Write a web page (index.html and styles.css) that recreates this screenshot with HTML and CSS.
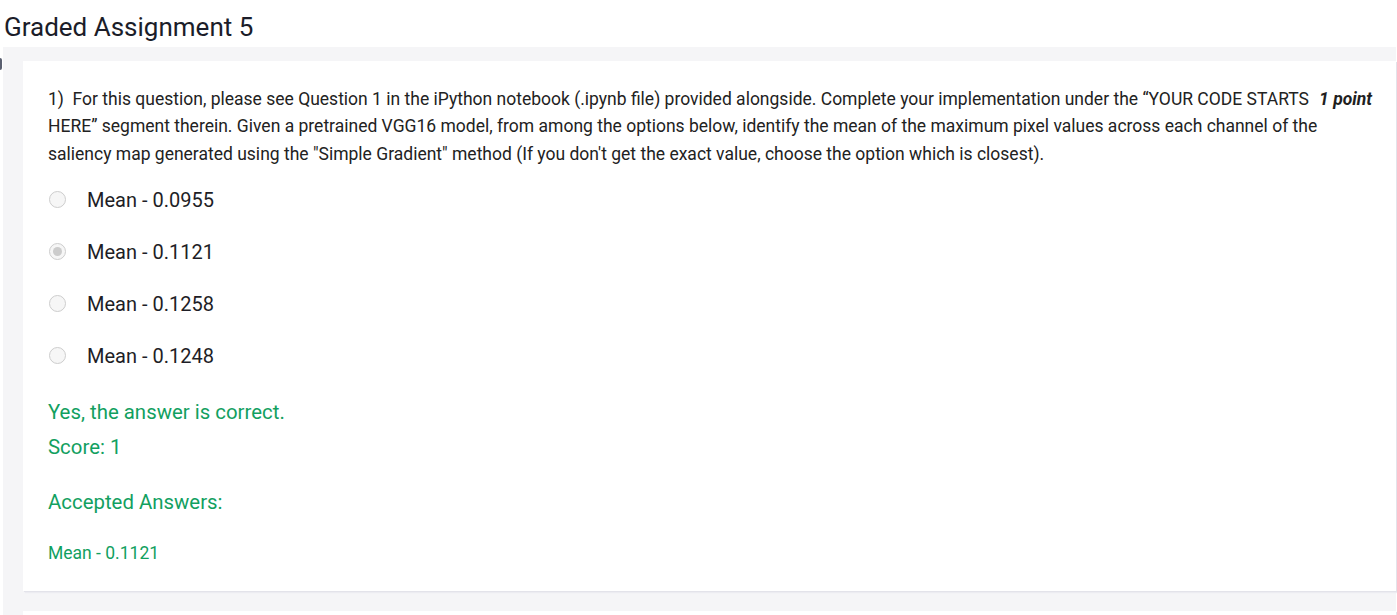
FILE: index.html
```html
<!DOCTYPE html>
<html>
<head>
<meta charset="utf-8">
<link rel="stylesheet" href="styles.css">
</head>
<body>
<span class="edge-mark"></span>
<h1 class="title">Graded Assignment 5</h1>
<div class="panel">
  <div class="card">
    <div class="question">
      <div class="q-point">1 point</div>
      <div class="q-text">1)&nbsp; For this question, please see Question 1 in the iPython notebook (.ipynb file) provided alongside. Complete your implementation under the “YOUR CODE STARTS HERE” segment therein. Given a pretrained VGG16 model, from among the options below, identify the mean of the maximum pixel values across each channel of the saliency map generated using the "Simple Gradient" method (If you don't get the exact value, choose the option which is closest).</div>
    </div>
    <div class="options">
      <div class="option"><span class="radio"></span><span class="opt-label">Mean - 0.0955</span></div>
      <div class="option"><span class="radio checked"></span><span class="opt-label">Mean - 0.1121</span></div>
      <div class="option"><span class="radio"></span><span class="opt-label">Mean - 0.1258</span></div>
      <div class="option"><span class="radio"></span><span class="opt-label">Mean - 0.1248</span></div>
    </div>
    <div class="feedback">
      <div class="fb-line">Yes, the answer is correct.</div>
      <div class="fb-line">Score: 1</div>
      <div class="fb-accepted">Accepted Answers:</div>
      <div class="fb-answer">Mean - 0.1121</div>
    </div>
  </div>
  <div class="card next"></div>
</div>
</body>
</html>
```

FILE: styles.css
```css
html, body {
  margin: 0;
  padding: 0;
  background: #ffffff;
  font-family: Roboto, "Liberation Sans", Arial, sans-serif;
  overflow: hidden;
}

body {
  position: relative;
  height: 615px;
}

.edge-mark {
  position: absolute;
  left: -2px;
  top: 58px;
  width: 4px;
  height: 12px;
  border-radius: 2px;
  background: #5a5f70;
}

.title {
  margin: 0;
  padding: 11px 0 0 4px;
  height: 36px;
  font-size: 26px;
  line-height: 32px;
  font-weight: 400;
  color: #1b1d29;
}

.panel {
  margin-left: 3px;
  width: 1373px;
  background: #f5f5f7;
  padding: 14px 0 0 20px;
  display: flex;
  flex-direction: column;
  gap: 20px;
}

.card {
  background: #ffffff;
  box-shadow: 1px 1px 0 #e3e3ea, 2px 2px 1px #ececf1;
  height: 530px;
  padding: 25px 24px 0 25px;
  box-sizing: border-box;
  flex: none;
}

.card.next {
  height: 40px;
  padding: 0;
}

.question {
  font-size: 17.5px;
  line-height: 27.3px;
  color: #222222;
}

.q-point {
  float: right;
  margin-left: 10px;
  font-weight: 700;
  font-style: italic;
  white-space: nowrap;
  color: #1f1f1f;
}

.options {
  margin-top: 6px;
  display: flex;
  flex-direction: column;
}

.option {
  height: 52px;
  display: flex;
  align-items: center;
}

.radio {
  width: 17px;
  height: 17px;
  margin-left: 1px;
  border: 1px solid #cdcdcd;
  border-radius: 50%;
  background: #f6f6f6;
  box-sizing: border-box;
  position: relative;
  flex: none;
}

.radio.checked::after {
  content: "";
  position: absolute;
  left: 3px;
  top: 3px;
  width: 9px;
  height: 9px;
  border-radius: 50%;
  background: #cccccc;
}

.opt-label {
  margin-left: 21px;
  font-size: 20px;
  color: #1e1e26;
}

.feedback {
  margin-top: 13px;
  color: #12a05f;
}

.fb-line {
  font-size: 20.4px;
  line-height: 35px;
}

.fb-accepted {
  margin-top: 20px;
  font-size: 20.4px;
  line-height: 35px;
}

.fb-answer {
  margin-top: 23px;
  font-size: 17.5px;
  line-height: 20px;
}
```
